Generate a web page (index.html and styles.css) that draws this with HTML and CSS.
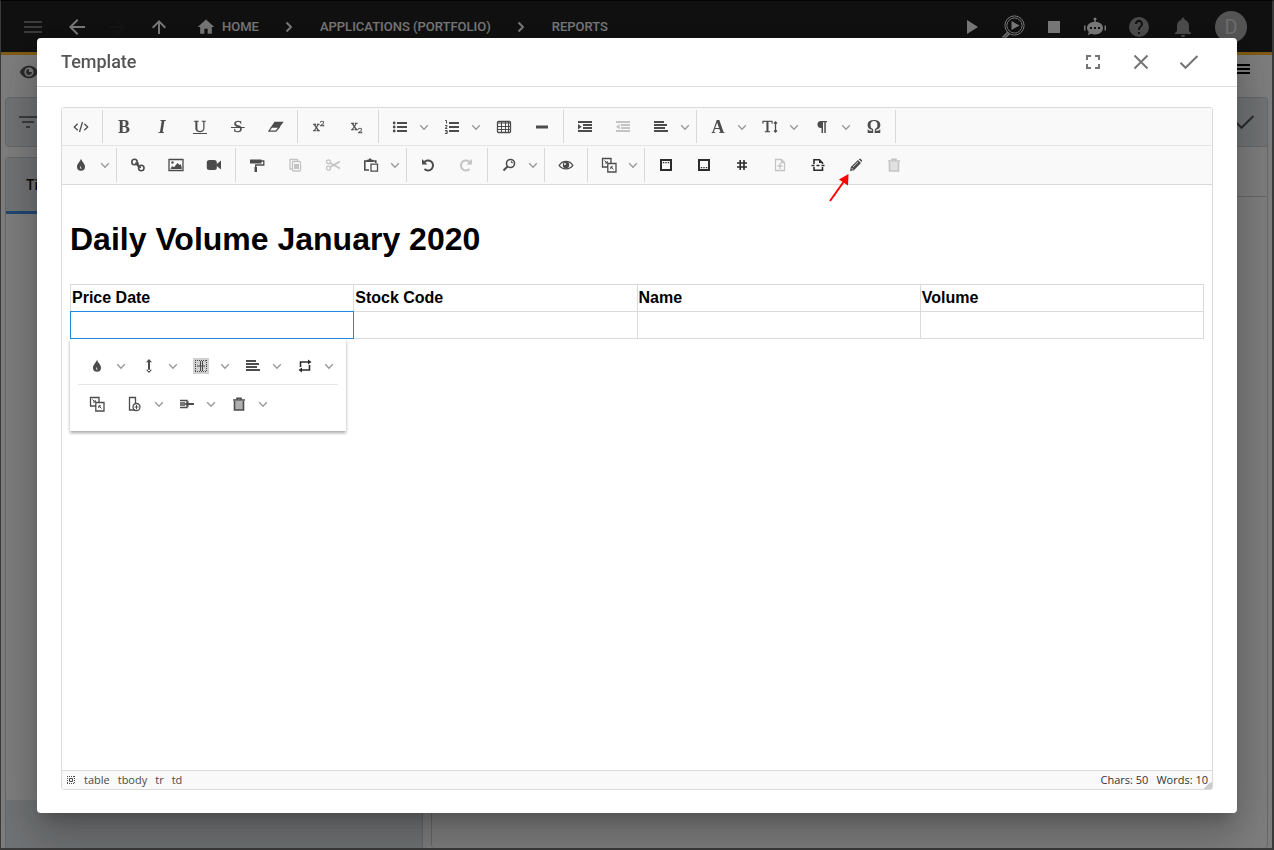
FILE: index.html
```html
<!DOCTYPE html>
<html lang="en">
<head>
<meta charset="utf-8">
<title>Template</title>
<link rel="stylesheet" href="styles.css">
</head>
<body>
<svg class="sprite" aria-hidden="true">
  <symbol id="menu" viewBox="0 0 24 24"><path d="M3 6h18v2H3zm0 5h18v2H3zm0 5h18v2H3z"/></symbol>
  <symbol id="lines" viewBox="0 0 24 24"><path d="M4 4h16v2H4zm0 4h16v2H4zm0 4h16v2H4z"/></symbol>
  <symbol id="back" viewBox="0 0 24 24"><path d="M20 11H7.8l5.6-5.6L12 4l-8 8 8 8 1.4-1.4L7.8 13H20z"/></symbol>
  <symbol id="forward" viewBox="0 0 24 24"><path d="M4 11h12.2l-5.6-5.6L12 4l8 8-8 8-1.4-1.4 5.6-5.6H4z"/></symbol>
  <symbol id="up" viewBox="0 0 24 24"><path d="M11 19V8.8l-4.6 4.6L5 12l7-7 7 7-1.4 1.4L13 8.800V19z"/></symbol>
  <symbol id="home" viewBox="0 0 24 24"><path d="M10 20v-6h4v6h5v-8h3L12 3 2 12h3v8z"/></symbol>
  <symbol id="crumb" viewBox="0 0 8 12"><path d="m1.500 1.500 4.500 4.500-4.500 4.500" class="line2"/></symbol>
  <symbol id="play" viewBox="0 0 24 24"><path d="M7 5v14l11-7z"/></symbol>
  <symbol id="inspect" viewBox="0 0 24 24"><path d="M10.500 6v9l8-4.500z"/><circle cx="13.500" cy="10.500" r="9.600" class="line1"/><circle cx="13.500" cy="10.500" r="7.600" class="line1"/><path d="M7 17 1.500 22.500M8.500 18.500 4 23" class="line15"/></symbol>
  <symbol id="stop" viewBox="0 0 24 24"><path d="M6 6h12v12H6z"/></symbol>
  <symbol id="robot" viewBox="0 0 24 24"><path d="M11.200 7V5.300a1.500 1.500 0 1 1 1.600 0V7C17 7 20 9.500 20 13s-3 6.500-8 6.500c-1.500 0-2.500-.3-3.500-.7L4.800 20l1-3.200C4.600 15.800 4 14.500 4 13c0-3.500 3-6 7.200-6zM1 10.500h1.500v5H1zm20.500 0H23v5h-1.500z"/><path class="dim" d="M7 12h2v2H7zm4 0h2v2h-2zm4 0h2v2h-2z"/></symbol>
  <symbol id="help" viewBox="0 0 24 24"><path d="M12 2a10 10 0 1 0 0 20 10 10 0 0 0 0-20zm1 17h-2v-2h2zm2.100-7.700-.9.900c-.7.700-1.200 1.300-1.200 2.800h-2v-.5c0-1.100.5-2.100 1.200-2.800l1.200-1.300c.4-.3.600-.8.600-1.400a2 2 0 0 0-4 0H8a4 4 0 1 1 7.100 2.300z"/></symbol>
  <symbol id="bell" viewBox="0 0 24 24"><path d="M12 22a2 2 0 0 0 2-2h-4a2 2 0 0 0 2 2zm6-6v-5c0-3.100-1.600-5.600-4.500-6.300V4a1.500 1.500 0 0 0-3 0v.7C7.600 5.400 6 7.900 6 11v5l-2 2v1h16v-1z"/></symbol>
  <symbol id="visible" viewBox="0 0 24 24"><path d="M12 4.500C7 4.500 2.700 7.600 1 12c1.700 4.400 6 7.500 11 7.500s9.300-3.100 11-7.500c-1.700-4.400-6-7.500-11-7.500zM12 17.500a5.500 5.500 0 1 1 0-11 5.500 5.500 0 0 1 0 11zm0-9a3.500 3.500 0 1 0 3.500 3.500H12z"/></symbol>
  <symbol id="filter" viewBox="0 0 24 24"><path d="M10 18h4v-2h-4zM3 6v2h18V6zm3 7h12v-2H6z"/></symbol>
  <symbol id="check" viewBox="0 0 24 24"><path d="m3.500 12.800 5 5L20.500 6" class="line2"/></symbol>
  <symbol id="close" viewBox="0 0 24 24"><path d="m5.500 5.500 13 13m0-13-13 13" class="line2"/></symbol>
  <symbol id="expand" viewBox="0 0 24 24"><path d="M5 5h5v2H7v3H5zm9 0h5v5h-2V7h-3zm3 9h2v5h-5v-2h3zM5 14h2v3h3v2H5z"/></symbol>

  <symbol id="chev" viewBox="0 0 10 16"><path d="m1.200 6.300 3.800 4 3.800-4" class="line"/></symbol>
  <symbol id="code" viewBox="0 0 16 16"><path d="M4.700 4.800 1.300 8l3.400 3.200m6.600-6.400L14.700 8l-3.400 3.200M9.500 3l-3 10" class="line"/></symbol>
  <symbol id="eraser" viewBox="0 0 16 16"><path d="M6.500 2.800h9.200l-4.500 6H2.500z"/><path d="M3.700 8 .9 12.200h7L11.500 8" class="line"/></symbol>
  <symbol id="ul" viewBox="0 0 16 16"><path d="M5 3h10v2H5zm0 4h10v2H5zm0 4h10v2H5z"/><circle cx="2.200" cy="4" r="1.400"/><circle cx="2.200" cy="8" r="1.400"/><circle cx="2.200" cy="12" r="1.400"/></symbol>
  <symbol id="ol" viewBox="0 0 16 16"><path d="M5 3h10v2H5zm0 4h10v2H5zm0 4h10v2H5z"/><path d="M1.200 1.500h1.300v3M1 6.500h2v1.300L1 9.400h2.400M1 11.500h2.200v3H1m.5-1.500h1.500" class="line1"/></symbol>
  <symbol id="table" viewBox="0 0 16 16"><rect x="1.500" y="2.500" width="13" height="11" rx="1" class="line"/><path d="M1.500 4h13M1.500 7.500h13m-13 3h13M5.500 3v10m4-10v10m3-10v10" class="line1"/></symbol>
  <symbol id="hr" viewBox="0 0 16 16"><path d="M2 6.500h12v3H2z"/></symbol>
  <symbol id="indent" viewBox="0 0 16 16"><path d="M1 2h14v2H1zm5 3h9v2H6zm0 3h9v2H6zm-5 3h14v2H1zM1 5l3.700 2.700L1 10.400z"/></symbol>
  <symbol id="outdent" viewBox="0 0 16 16"><path d="M1 2h14v2H1zm5 3h9v2H6zm0 3h9v2H6zm-5 3h14v2H1zM4.700 5 1 7.700l3.700 2.700z"/></symbol>
  <symbol id="align" viewBox="0 0 16 16"><path d="M1 2h10v2H1zm0 3h13v2H1zm0 3h11v2H1zm0 3h14v2H1z"/></symbol>
  <symbol id="para" viewBox="0 0 16 16"><path d="M6.500 2H13v1.300h-1.200V14h-1.500V3.300H9V14H7.500V9A3.500 3.500 0 0 1 6.500 2z"/></symbol>
  <symbol id="drop" viewBox="0 0 16 16"><path d="M8 1.500C7.600 4.500 4 6.500 4 9.800a4 4 0 0 0 8 0C12 6.500 8.400 4.500 8 1.500z"/><path d="M7.200 8.500v3h1.800c-.9-.6-1.300-1.600-1.800-3z" class="paper"/></symbol>
  <symbol id="link" viewBox="0 0 16 16"><circle cx="4.500" cy="5" r="2.700" class="line15"/><circle cx="11.300" cy="11" r="2.700" class="line15"/><path d="m5.500 5.500 2.500 3.500 3 1.500M8 5.500v3" class="line15"/></symbol>
  <symbol id="image" viewBox="0 0 16 16"><path d="M1 2.500h14v11H1z" class="line"/><path d="m2.500 12 1.500-3 2 1.200L9.500 6l2 2 1-1 1.200 3v2z"/><circle cx="4.500" cy="5.500" r="1.200"/></symbol>
  <symbol id="video" viewBox="0 0 16 16"><rect x=".8" y="3" width="10" height="10" rx="2.500"/><path d="m9.500 8 5.500-4.500v9z"/></symbol>
  <symbol id="paint" viewBox="0 0 16 16"><path d="M1 2.500h11.500v4H1zM5.500 10h2.500v5H5.500z"/><path d="M12 4h2.800v4H6.700v3" class="line"/></symbol>
  <symbol id="copy" viewBox="0 0 16 16"><path d="M5 12H3V2.500h7.500V4" class="line"/><rect x="5.500" y="4.500" width="8" height="9.500" rx="1" class="line"/><path d="M7 7h5v5H7z"/></symbol>
  <symbol id="cut" viewBox="0 0 16 16"><circle cx="3.500" cy="4.800" r="2" class="line"/><circle cx="3.500" cy="11.200" r="2" class="line"/><path d="M5.300 6 15 11.500M5.300 10 15 4.500" class="line15"/></symbol>
  <symbol id="paste" viewBox="0 0 16 16"><path d="M6 13H1.800V4h11v2" class="line15"/><path d="M3.500 5V3l2-.5L7 1l1.500 1.500 2 .5v2z"/><path d="M8 7.200h6.500v7H8z" class="line"/></symbol>
  <symbol id="undo" viewBox="0 0 16 16"><path d="M4 5.500a5 5 0 1 1 .5 6.500" class="line2"/><path d="M2 2v5.500h5.500z"/></symbol>
  <symbol id="redo" viewBox="0 0 16 16"><path d="M12 5.500a5 5 0 1 0-.5 6.500" class="line2"/><path d="M14 2v5.500H8.500z"/></symbol>
  <symbol id="search" viewBox="0 0 16 16"><circle cx="9.500" cy="6.500" r="4" class="line15"/><path d="M10 4.500 11.500 6" class="line"/><path d="m6.500 9.500-4 4" class="line2"/></symbol>
  <symbol id="eye" viewBox="0 0 16 16"><path d="M1.200 8.300C4.500 3 11.500 3 14.800 8.300 11.500 13 4.500 13 1.200 8.300z" class="line"/><circle cx="8" cy="8" r="3.200"/><circle cx="7" cy="7" r="1" class="paper"/></symbol>
  <symbol id="merge" viewBox="0 0 16 16"><path d="M6.500 10H1.500V1.500H10V6M6.800 6.500H15V15H6.800z" class="line"/><path d="m3.500 3.500 2.500 2.500M4 6h2.200V4m6.300 8.500L10 10M9.800 12V9.800H12" class="line1"/></symbol>
  <symbol id="top" viewBox="0 0 16 16"><path d="M3 3h10v10H3z" class="line2"/><path d="M4.800 5h1.500v1.200H4.800zm2.500 0h1.400v1.200H7.300zm2.500 0h1.400v1.200H9.800z"/></symbol>
  <symbol id="bottom" viewBox="0 0 16 16"><path d="M3 3h10v10H3z" class="line2"/><path d="M4.800 10h1.500v1.200H4.800zm2.500 0h1.400v1.200H7.300zm2.500 0h1.400v1.200H9.800z"/></symbol>
  <symbol id="hash" viewBox="0 0 16 16"><path d="M6.200 3v10m3.800-10v10M3 6h10M3 10h10" class="line15"/></symbol>
  <symbol id="fileadd" viewBox="0 0 16 16"><path d="M3.500 2.500h6l3 3v8h-9zM9.500 2.500v3h3M8 6v6M5.500 9h5" class="line"/></symbol>
  <symbol id="pagebreak" viewBox="0 0 16 16"><path d="M4 7V2.800h5.500L12.500 6v1M4 10v3.200h8.500V10" class="line15"/><path d="M9 2v4h4zM1.500 7.800h3v1.400h-3zm5 0h3v1.400h-3zm5 0h3v1.400h-3z"/></symbol>
  <symbol id="pencil" viewBox="0 0 16 16"><path d="m2 14 .8-4L10 3l3 3-7 7.200zM10.800 2.300l.8-.5h1L14 3.300v1L13.500 5z"/><path d="m5 10 5-5M3.500 11l1.500 1.700" class="edge"/></symbol>
  <symbol id="trash" viewBox="0 0 16 16"><path d="M3.500 5h9v9h-9z" class="soft"/><path d="M3.500 5v9h9V5M2 4h12M6 3.500V2.300h4v1.200" class="line15"/></symbol>
  <symbol id="valign" viewBox="0 0 16 16"><path d="M7 3h2v10H7zM8 1l3 3.200H5zm0 14 3-3.200H5z"/></symbol>
  <symbol id="split" viewBox="0 0 16 16"><path d="M0 0h16v16H0z" class="wash"/><path d="M2 2.500h12M2 13.500h12M2.500 2v12m11-12v12M2 8h3m6 0h3" class="dots"/><path d="M7.500 3v10m2-10v10M5 8h6" class="line1"/></symbol>
  <symbol id="repeat" viewBox="0 0 16 16"><path d="M3.500 9V4H12M12.500 7v5H4" class="line15"/><path d="m11 1.500 3.500 2.500L11 6.500zM5 9.500 1.500 12 5 14.500z"/></symbol>
  <symbol id="addcol" viewBox="0 0 16 16"><path d="M8 14H2.500V1.500h6V7" class="line"/><circle cx="9.500" cy="11" r="3.500" class="line"/><path d="M9.500 9v4m-2-2h4" class="line1"/></symbol>
  <symbol id="delcol" viewBox="0 0 16 16"><path d="M1 4.500h7v1.500M1 11.500h7V10M1 7h5M1 9h5" class="line"/><path d="M8 7h7v2H8zM9.500 4.500v7L5.500 8z"/></symbol>
</svg>

<div class="app">
  <header class="bar">
    <nav class="nav" aria-label="Breadcrumb">
      <button class="ib faint" aria-label="Menu"><svg><use href="#menu"/></svg></button>
      <button class="ib" aria-label="Back"><svg><use href="#back"/></svg></button>
      <button class="ib off" aria-label="Forward"><svg><use href="#forward"/></svg></button>
      <button class="ib" aria-label="Up"><svg><use href="#up"/></svg></button>
      <a class="crumb" href="#"><svg class="house"><use href="#home"/></svg>HOME</a>
      <svg class="arrow"><use href="#crumb"/></svg>
      <a class="crumb" href="#">APPLICATIONS (PORTFOLIO)</a>
      <svg class="arrow"><use href="#crumb"/></svg>
      <a class="crumb" href="#">REPORTS</a>
    </nav>
    <div class="actions">
      <div class="run">
        <button class="ib" aria-label="Run"><svg><use href="#play"/></svg></button>
        <button class="ib" aria-label="Debug"><svg><use href="#inspect"/></svg></button>
        <button class="ib" aria-label="Stop"><svg><use href="#stop"/></svg></button>
        <button class="ib" aria-label="Assistant"><svg><use href="#robot"/></svg></button>
      </div>
      <button class="ib grey" aria-label="Help"><svg><use href="#help"/></svg></button>
      <button class="ib grey" aria-label="Notifications"><svg><use href="#bell"/></svg></button>
      <button class="avatar">D</button>
    </div>
  </header>
  <main class="page">
    <div class="tools">
      <button class="ib view" aria-label="View"><svg><use href="#visible"/></svg></button>
      <button class="ib black" aria-label="Options"><svg><use href="#lines"/></svg></button>
    </div>
    <div class="columns">
      <section class="side">
        <div class="card search"><svg><use href="#filter"/></svg></div>
        <div class="card list"><div class="tab">Title</div><div class="rows"></div><div class="foot"></div></div>
      </section>
      <section class="card detail">
        <div class="head"><svg><use href="#check"/></svg></div>
        <div class="sub"></div>
      </section>
    </div>
  </main>
</div>

<div class="scrim">
  <div class="dialog" role="dialog" aria-labelledby="dlg-title">
    <header class="dhead">
      <h2 id="dlg-title">Template</h2>
      <button aria-label="Full screen"><svg><use href="#expand"/></svg></button>
      <button aria-label="Close"><svg><use href="#close"/></svg></button>
      <button aria-label="Apply"><svg><use href="#check"/></svg></button>
    </header>
    <div class="dbody">
      <div class="editor">
        <div class="toolbar" role="toolbar" aria-label="Formatting">
          <div class="trow">
            <button class="tb" aria-label="Source"><svg><use href="#code"/></svg></button>
            <span class="sep"></span>
            <button class="tb glyph heavy" aria-label="Bold">B</button>
            <button class="tb glyph heavy slant" aria-label="Italic">I</button>
            <button class="tb glyph" aria-label="Underline"><span class="under">U</span></button>
            <button class="tb glyph" aria-label="Strikethrough"><span class="strike">S</span></button>
            <button class="tb" aria-label="Clear formatting"><svg><use href="#eraser"/></svg></button>
            <span class="sep"></span>
            <button class="tb script" aria-label="Superscript"><span>x<sup>2</sup></span></button>
            <button class="tb script" aria-label="Subscript"><span>x<sub>2</sub></span></button>
            <span class="sep"></span>
            <button class="tb" aria-label="Bullets"><svg><use href="#ul"/></svg></button><button class="dd" aria-label="Bullet styles"><svg><use href="#chev"/></svg></button>
            <button class="tb" aria-label="Numbering"><svg><use href="#ol"/></svg></button><button class="dd" aria-label="Number styles"><svg><use href="#chev"/></svg></button>
            <button class="tb" aria-label="Table"><svg><use href="#table"/></svg></button>
            <button class="tb" aria-label="Line"><svg><use href="#hr"/></svg></button>
            <span class="sep"></span>
            <button class="tb" aria-label="Indent"><svg><use href="#indent"/></svg></button>
            <button class="tb" disabled aria-label="Outdent"><svg><use href="#outdent"/></svg></button>
            <button class="tb" aria-label="Align"><svg><use href="#align"/></svg></button><button class="dd" aria-label="Alignments"><svg><use href="#chev"/></svg></button>
            <span class="sep"></span>
            <button class="tb glyph heavy" aria-label="Font">A</button><button class="dd" aria-label="Fonts"><svg><use href="#chev"/></svg></button>
            <button class="tb glyph" aria-label="Font size">T<svg class="tall" viewBox="0 0 5 16"><path d="M2.500 3v10M1 4.500 2.500 3 4 4.500m-3 7L2.500 13 4 11.500" class="line"/></svg></button><button class="dd" aria-label="Sizes"><svg><use href="#chev"/></svg></button>
            <button class="tb" aria-label="Paragraph"><svg><use href="#para"/></svg></button><button class="dd" aria-label="Paragraph styles"><svg><use href="#chev"/></svg></button>
            <button class="tb glyph heavy" aria-label="Symbols">Ω</button>
            <span class="sep"></span>
          </div>
          <div class="trow">
            <button class="tb" aria-label="Color"><svg><use href="#drop"/></svg></button><button class="dd" aria-label="Colors"><svg><use href="#chev"/></svg></button>
            <span class="sep"></span>
            <button class="tb" aria-label="Link"><svg><use href="#link"/></svg></button>
            <button class="tb" aria-label="Image"><svg><use href="#image"/></svg></button>
            <button class="tb" aria-label="Video"><svg><use href="#video"/></svg></button>
            <span class="sep"></span>
            <button class="tb" aria-label="Copy format"><svg><use href="#paint"/></svg></button>
            <button class="tb" disabled aria-label="Copy"><svg><use href="#copy"/></svg></button>
            <button class="tb" disabled aria-label="Cut"><svg><use href="#cut"/></svg></button>
            <button class="tb" aria-label="Paste"><svg><use href="#paste"/></svg></button><button class="dd" aria-label="Paste options"><svg><use href="#chev"/></svg></button>
            <span class="sep"></span>
            <button class="tb" aria-label="Undo"><svg><use href="#undo"/></svg></button>
            <button class="tb" disabled aria-label="Redo"><svg><use href="#redo"/></svg></button>
            <span class="sep"></span>
            <button class="tb" aria-label="Find"><svg><use href="#search"/></svg></button><button class="dd" aria-label="Find options"><svg><use href="#chev"/></svg></button>
            <span class="sep"></span>
            <button class="tb" aria-label="Preview"><svg><use href="#eye"/></svg></button>
            <span class="sep"></span>
            <button class="tb" aria-label="Merge field"><svg><use href="#merge"/></svg></button><button class="dd" aria-label="Merge fields"><svg><use href="#chev"/></svg></button>
            <span class="sep"></span>
            <button class="tb strong" aria-label="Header"><svg><use href="#top"/></svg></button>
            <button class="tb strong" aria-label="Footer"><svg><use href="#bottom"/></svg></button>
            <button class="tb strong" aria-label="Page number"><svg><use href="#hash"/></svg></button>
            <button class="tb" disabled aria-label="Add page"><svg><use href="#fileadd"/></svg></button>
            <button class="tb strong" aria-label="Page break"><svg><use href="#pagebreak"/></svg></button>
            <button class="tb marked" aria-label="Edit"><svg><use href="#pencil"/></svg><svg class="pointer" viewBox="0 0 20 28"><path d="M1 27 14.500 8" class="shaft"/><path d="M19.500 0 19 11.500 10 5.500z"/></svg></button>
            <button class="tb" disabled aria-label="Delete"><svg><use href="#trash"/></svg></button>
          </div>
        </div>
        <div class="content" contenteditable="true" spellcheck="false">
          <h1>Daily Volume January 2020</h1>
          <div class="tablebox">
            <table>
              <tbody>
                <tr><th>Price Date</th><th>Stock Code</th><th>Name</th><th>Volume</th></tr>
                <tr><td class="selected"><br></td><td><br></td><td><br></td><td><br></td></tr>
              </tbody>
            </table>
            <div class="popup" contenteditable="false" role="toolbar" aria-label="Cell">
              <div class="trow">
                <button class="tb" aria-label="Cell color"><svg><use href="#drop"/></svg></button><button class="dd" aria-label="Cell colors"><svg><use href="#chev"/></svg></button>
                <button class="tb" aria-label="Vertical align"><svg><use href="#valign"/></svg></button><button class="dd" aria-label="Vertical alignments"><svg><use href="#chev"/></svg></button>
                <button class="tb" aria-label="Split"><svg><use href="#split"/></svg></button><button class="dd" aria-label="Split options"><svg><use href="#chev"/></svg></button>
                <button class="tb" aria-label="Cell align"><svg><use href="#align"/></svg></button><button class="dd" aria-label="Cell alignments"><svg><use href="#chev"/></svg></button>
                <button class="tb strong" aria-label="Repeat"><svg><use href="#repeat"/></svg></button><button class="dd" aria-label="Repeat options"><svg><use href="#chev"/></svg></button>
              </div>
              <div class="trow">
                <button class="tb" aria-label="Merge"><svg><use href="#merge"/></svg></button>
                <button class="tb" aria-label="Add column"><svg><use href="#addcol"/></svg></button><button class="dd" aria-label="Add column options"><svg><use href="#chev"/></svg></button>
                <button class="tb" aria-label="Add row"><svg><use href="#delcol"/></svg></button><button class="dd" aria-label="Add row options"><svg><use href="#chev"/></svg></button>
                <button class="tb" aria-label="Delete cell"><svg><use href="#trash"/></svg></button><button class="dd" aria-label="Delete options"><svg><use href="#chev"/></svg></button>
              </div>
            </div>
          </div>
        </div>
        <footer class="status">
          <svg viewBox="0 0 8 8"><path d="M0 .5h8M0 7.500h8M.5 0v8m7-8v8" class="ticks"/><path d="M2.500 2.500h3v3h-3z" class="line1"/></svg>
          <a href="#">table</a><a href="#">tbody</a><a href="#">tr</a><a href="#">td</a>
          <span class="counts"><span>Chars: 50</span><span>Words: 10</span></span>
        </footer>
      </div>
    </div>
  </div>
</div>
</body>
</html>
```
FILE: styles.css
```css
* { box-sizing: border-box; }
html, body { height: 100%; }
body { margin: 0; overflow: hidden; font-family: Roboto, sans-serif; color: #222; }
button { margin: 0; padding: 0; border: 0; background: none; color: inherit; font: inherit; display: flex; flex: none; align-items: center; justify-content: center; }
a { color: inherit; text-decoration: none; }
svg { display: block; flex: none; fill: currentColor; }
.sprite { position: absolute; width: 0; height: 0; }

.line, .line1, .line15, .line2, .edge, .dots, .ticks, .shaft { fill: none; stroke: currentColor; }
.line { stroke-width: 1.3; }
.line1 { stroke-width: 1; }
.line15 { stroke-width: 1.6; }
.line2 { stroke-width: 2; }
.edge { stroke: #f9f9f9; stroke-width: .7; }
.paper { fill: #f9f9f9; }
.dim { fill: #212121; }
.soft { opacity: .45; }
.wash { fill: #d0d0d0; }
.dots, .ticks { stroke-width: 1; stroke-dasharray: 1 1; }

/* Application behind the dialog */
.app { height: 100%; display: flex; flex-direction: column; background: #fafafa; border: solid #757575; border-width: 1px 2px 2px 1px; border-top-color: #080808; }
.bar { flex: none; height: 54px; display: flex; justify-content: space-between; background: #212121; border-bottom: 3px solid #ffb62c; color: #f5f5f5; }
.nav, .actions, .run { display: flex; align-items: center; }
.nav { padding-left: 20px; }
.ib svg { width: 24px; height: 24px; }
.nav .ib { margin-right: 18px; }
.nav .faint { margin-right: 20px; }
.nav .ib:nth-child(2) { margin-right: 16px; }
.faint { color: #777; }
.off { color: #282828; }
.grey { color: #999; }
.crumb { display: flex; align-items: center; font-size: 13px; font-weight: 500; color: #eee; }
.house { width: 20px; height: 20px; margin: 0 6px 0 7px; }
.arrow { width: 8px; height: 12px; margin: 0 27px 0 26px; }
.actions { gap: 20px; padding-right: 25px; }
.run { gap: 17px; }
.avatar { width: 32px; height: 32px; border-radius: 50%; background: #aaa; color: #ddd; font-size: 20px; }
.page { flex: 1; display: flex; flex-direction: column; padding: 0 4px; }
.tools { display: flex; justify-content: space-between; padding: 5px 14px 13px; }
.view { color: #555; }
.view svg { width: 20px; height: 20px; }
.black { color: #000; }
.columns { flex: 1; display: flex; gap: 8px; }
.side { flex: 1; display: flex; flex-direction: column; gap: 10px; }
.card { border: 1px solid #c9cdd0; border-radius: 4px; overflow: hidden; }
.search { height: 50px; background: #dfe4e8; color: #777; padding: 12px 10px; }
.search svg, .head svg { width: 24px; height: 24px; }
.list { flex: 1; display: flex; flex-direction: column; border-bottom: 0; border-radius: 4px 4px 0 0; }
.tab { height: 56px; padding: 18px 20px; background: #dfe4e8; border-bottom: 3px solid #4090e0; font-size: 14px; font-weight: 500; line-height: 18px; color: #111; }
.rows { flex: 1; }
.foot { height: 48px; background: #dfe4e8; }
.detail { flex: 2; border-bottom: 0; }
.head { height: 49px; display: flex; align-items: center; justify-content: flex-end; padding-right: 10px; background: #dfe4e8; border-bottom: 1px solid #c9cdd0; color: #555; }
.sub { height: 50px; border-bottom: 1px solid #c9cdd0; }

/* Dialog */
.scrim { position: fixed; inset: 0; display: flex; padding: 38px 37px 37px; background: rgba(0, 0, 0, .5); }
.dialog { flex: 1; min-width: 0; display: flex; flex-direction: column; background: #fff; border-radius: 4px; box-shadow: 0 11px 15px -7px rgba(0,0,0,.2), 0 24px 38px 3px rgba(0,0,0,.14), 0 9px 46px 8px rgba(0,0,0,.12); }
.dhead { display: flex; align-items: center; padding: 0 24px; height: 49px; border-bottom: 1px solid #ddd; color: #757575; }
.dhead h2 { flex: 1; margin: 0; font-size: 18px; line-height: 22px; font-weight: 500; color: #555; }
.dhead button { width: 48px; height: 48px; }
.dhead svg { width: 24px; height: 24px; }
.dbody { flex: 1; display: flex; padding: 20px 24px 23px; }

/* Editor */
.editor { flex: 1; min-width: 0; display: flex; flex-direction: column; border: 1px solid #dadada; border-radius: 3px; color: #4c4c4c; }
.toolbar { background: #f9f9f9; border-bottom: 1px solid #dadada; }
.trow { display: flex; min-height: 38px; }
.trow:first-child { border-bottom: 1px solid #e4e4e4; }
.tb { width: 38px; height: 37px; padding-top: 1px; }
.tb svg { width: 16px; height: 16px; }
.tb:disabled { color: #c4c4c4; }
.glyph { font-family: "Liberation Serif", serif; font-size: 17px; -webkit-text-stroke: .3px; }
.heavy { font-size: 18px; font-weight: bold; -webkit-text-stroke: 0; }
.slant { font-style: italic; }
.under { padding: 0 1px; border-bottom: 1px solid; line-height: 13px; }
.strike { padding: 0 2px; background: linear-gradient(currentColor, currentColor) center / 100% 1px no-repeat; line-height: 18px; }
.tb .tall { width: 5px; }
.script { font: 12px/16px "DejaVu Serif", serif; -webkit-text-stroke: .3px; }
.script sup, .script sub { font-size: 8px; line-height: 8px; }
.strong { color: #2c2c2c; }
.dd { width: 14px; height: 37px; padding-top: 1px; justify-content: flex-start; color: #999; }
.dd svg { width: 10px; height: 16px; }
.sep { width: 1px; margin: 2px; background: #d8d8d8; }
.marked { position: relative; }
.marked .pointer { position: absolute; left: -8px; top: 28px; width: 20px; height: 28px; fill: #f00; }
.shaft { stroke: #f00; stroke-width: 2; }
.content { flex: 1; padding: 8px; background: #fff; color: #000; font-family: "Liberation Sans", Arial, sans-serif; font-size: 16px; outline: 0; }
.content h1 { margin: 21px 0 19px; font-size: 32px; line-height: 51px; }
.tablebox { position: relative; }
.content table { width: 100%; table-layout: fixed; border-collapse: collapse; }
.content th, .content td { padding: 1px; border: 1px solid #dadada; text-align: left; line-height: 24px; }
.content td.selected { border: 1px double #1e88e5; }
.popup { position: absolute; top: 100%; left: 0; padding: 8px; background: #fff; color: #4c4c4c; box-shadow: 0 2px 3px rgba(0,0,0,.35); }
.status { display: flex; align-items: center; height: 19px; padding: 0 4px 1px 5px; gap: 8px; border-top: 1px solid #dadada; background: linear-gradient(135deg, transparent 50%, #ccc 50%) right bottom / 8px 8px no-repeat #f9f9f9; font-family: "Open Sans", sans-serif; font-size: 11px; }
.status svg { width: 8px; height: 8px; margin-right: 1px; }
.counts { display: flex; gap: 8px; margin-left: auto; color: #333; }
```
